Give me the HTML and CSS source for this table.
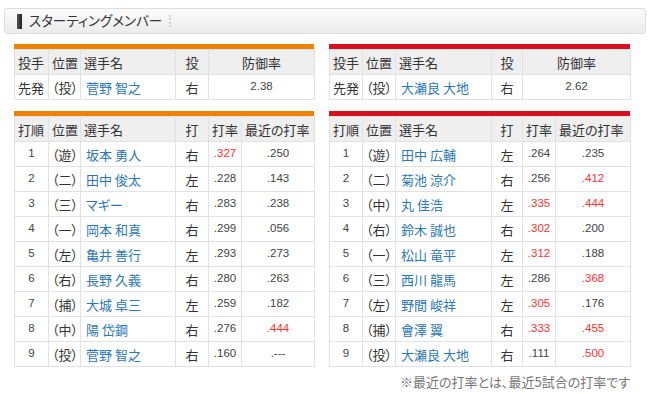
FILE: index.html
```html
<!DOCTYPE html>
<html lang="ja">
<head>
<meta charset="utf-8">
<link rel="stylesheet" href="styles.css">
</head>
<body>
<div class="title-bar">
  <span class="title-mark"></span>
  <span class="title-text">スターティングメンバー</span>
  <span class="title-sep"></span>
</div>
<div class="teams">
  <div class="team-col">
    <div class="team giants">
      <table class="tbl">
        <colgroup><col class="c1"><col class="c2"><col class="c3"><col class="c4"><col class="c5"><col class="c6"></colgroup>
        <tr class="head"><th>投手</th><th>位置</th><th>選手名</th><th class="ctr">投</th><th colspan="2" class="ctr">防御率</th></tr>
        <tr><td>先発</td><td>（投）</td><td class="name">菅野 智之</td><td class="ctr">右</td><td colspan="2" class="num">2.38</td></tr>
      </table>
    </div>
    <div class="team giants">
      <table class="tbl">
        <colgroup><col class="c1"><col class="c2"><col class="c3"><col class="c4"><col class="c5"><col class="c6"></colgroup>
        <tr class="head"><th>打順</th><th>位置</th><th>選手名</th><th class="ctr">打</th><th>打率</th><th>最近の打率</th></tr>
        <tr><td class="num">1</td><td>（遊）</td><td class="name">坂本 勇人</td><td class="ctr">右</td><td class="num hot">.327</td><td class="num">.250</td></tr>
        <tr><td class="num">2</td><td>（二）</td><td class="name">田中 俊太</td><td class="ctr">左</td><td class="num">.228</td><td class="num">.143</td></tr>
        <tr><td class="num">3</td><td>（三）</td><td class="name">マギー</td><td class="ctr">右</td><td class="num">.283</td><td class="num">.238</td></tr>
        <tr><td class="num">4</td><td>（一）</td><td class="name">岡本 和真</td><td class="ctr">右</td><td class="num">.299</td><td class="num">.056</td></tr>
        <tr><td class="num">5</td><td>（左）</td><td class="name">亀井 善行</td><td class="ctr">左</td><td class="num">.293</td><td class="num">.273</td></tr>
        <tr><td class="num">6</td><td>（右）</td><td class="name">長野 久義</td><td class="ctr">右</td><td class="num">.280</td><td class="num">.263</td></tr>
        <tr><td class="num">7</td><td>（捕）</td><td class="name">大城 卓三</td><td class="ctr">左</td><td class="num">.259</td><td class="num">.182</td></tr>
        <tr><td class="num">8</td><td>（中）</td><td class="name">陽 岱鋼</td><td class="ctr">右</td><td class="num">.276</td><td class="num hot">.444</td></tr>
        <tr><td class="num">9</td><td>（投）</td><td class="name">菅野 智之</td><td class="ctr">右</td><td class="num">.160</td><td class="num">.---</td></tr>
      </table>
    </div>
  </div>
  <div class="team-col right">
    <div class="team carp">
      <table class="tbl">
        <colgroup><col class="r1"><col class="r2"><col class="r3"><col class="r4"><col class="r5"><col class="r6"></colgroup>
        <tr class="head"><th>投手</th><th>位置</th><th>選手名</th><th class="ctr">投</th><th colspan="2" class="ctr">防御率</th></tr>
        <tr><td>先発</td><td>（投）</td><td class="name">大瀬良 大地</td><td class="ctr">右</td><td colspan="2" class="num">2.62</td></tr>
      </table>
    </div>
    <div class="team carp">
      <table class="tbl">
        <colgroup><col class="r1"><col class="r2"><col class="r3"><col class="r4"><col class="r5"><col class="r6"></colgroup>
        <tr class="head"><th>打順</th><th>位置</th><th>選手名</th><th class="ctr">打</th><th>打率</th><th>最近の打率</th></tr>
        <tr><td class="num">1</td><td>（遊）</td><td class="name">田中 広輔</td><td class="ctr">左</td><td class="num">.264</td><td class="num">.235</td></tr>
        <tr><td class="num">2</td><td>（二）</td><td class="name">菊池 涼介</td><td class="ctr">右</td><td class="num">.256</td><td class="num hot">.412</td></tr>
        <tr><td class="num">3</td><td>（中）</td><td class="name">丸 佳浩</td><td class="ctr">左</td><td class="num hot">.335</td><td class="num hot">.444</td></tr>
        <tr><td class="num">4</td><td>（右）</td><td class="name">鈴木 誠也</td><td class="ctr">右</td><td class="num hot">.302</td><td class="num">.200</td></tr>
        <tr><td class="num">5</td><td>（一）</td><td class="name">松山 竜平</td><td class="ctr">左</td><td class="num hot">.312</td><td class="num">.188</td></tr>
        <tr><td class="num">6</td><td>（三）</td><td class="name">西川 龍馬</td><td class="ctr">左</td><td class="num">.286</td><td class="num hot">.368</td></tr>
        <tr><td class="num">7</td><td>（左）</td><td class="name">野間 峻祥</td><td class="ctr">左</td><td class="num hot">.305</td><td class="num">.176</td></tr>
        <tr><td class="num">8</td><td>（捕）</td><td class="name">會澤 翼</td><td class="ctr">右</td><td class="num hot">.333</td><td class="num hot">.455</td></tr>
        <tr><td class="num">9</td><td>（投）</td><td class="name">大瀬良 大地</td><td class="ctr">右</td><td class="num">.111</td><td class="num hot">.500</td></tr>
      </table>
    </div>
    <p class="note">※最近の打率とは、最近5試合の打率です</p>
  </div>
</div>
</body>
</html>
```

FILE: styles.css
```css
html, body {
  margin: 0;
  padding: 0;
  background: #fff;
}
body {
  font-family: "Noto Sans CJK JP", "Liberation Sans", sans-serif;
  font-feature-settings: "palt";
  color: #333;
  font-size: 13px;
}
.title-bar {
  margin: 8px 4px 0 4px;
  height: 24px;
  border: 1px solid #dedede;
  border-radius: 3px;
  background: linear-gradient(#fbfbfb, #f3f3f3 50%, #ececec);
  display: flex;
  align-items: center;
  padding-left: 12px;
}
.title-mark {
  width: 5px;
  height: 15px;
  background: linear-gradient(90deg, #555, #222);
}
.title-text {
  margin-left: 7px;
  font-size: 13.5px;
  color: #333;
  line-height: 1;
}
.title-sep {
  margin-left: 7px;
  width: 0;
  height: 12px;
  border-left: 2px dotted #d0d0d0;
}
.teams {
  display: flex;
  gap: 15px;
  padding: 10px 0 0 14px;
}
.team-col {
  display: flex;
  flex-direction: column;
  gap: 11px;
  width: 300px;
}
.team-col.right {
  width: 301px;
}
.team {
  border-top: 5px solid #ef8200;
}
.team.carp {
  border-top-color: #d6101f;
}
.tbl {
  width: 100%;
  border-collapse: collapse;
  table-layout: fixed;
}
.tbl tr {
  height: 25px;
}
.tbl th, .tbl td {
  border: 1px solid #e2e2e2;
  padding: 0 0 0 3px;
  text-align: left;
  font-weight: normal;
  white-space: nowrap;
  overflow: hidden;
  line-height: 1;
}
.tbl th {
  background: #efefef;
  color: #333;
}
.tbl .ctr {
  text-align: center;
  padding: 0;
}
.tbl .name {
  color: #2c78b8;
  padding-left: 5px;
}
.tbl .num {
  text-align: center;
  padding: 0;
  font-family: "Liberation Sans", sans-serif;
  font-size: 11.5px;
  color: #444;
}
.tbl .num.hot {
  color: #ff3030;
}
.c1 { width: 34px; }
.c2 { width: 32px; }
.c3 { width: 95px; }
.c4 { width: 33px; }
.c5 { width: 33px; }
.c6 { width: 73px; }
.r1 { width: 33px; }
.r2 { width: 33px; }
.r3 { width: 96px; }
.r4 { width: 31px; }
.r5 { width: 33px; }
.r6 { width: 75px; }
.note {
  margin: -6px 0 0 0;
  text-align: right;
  font-size: 13px;
  color: #777;
}
```
